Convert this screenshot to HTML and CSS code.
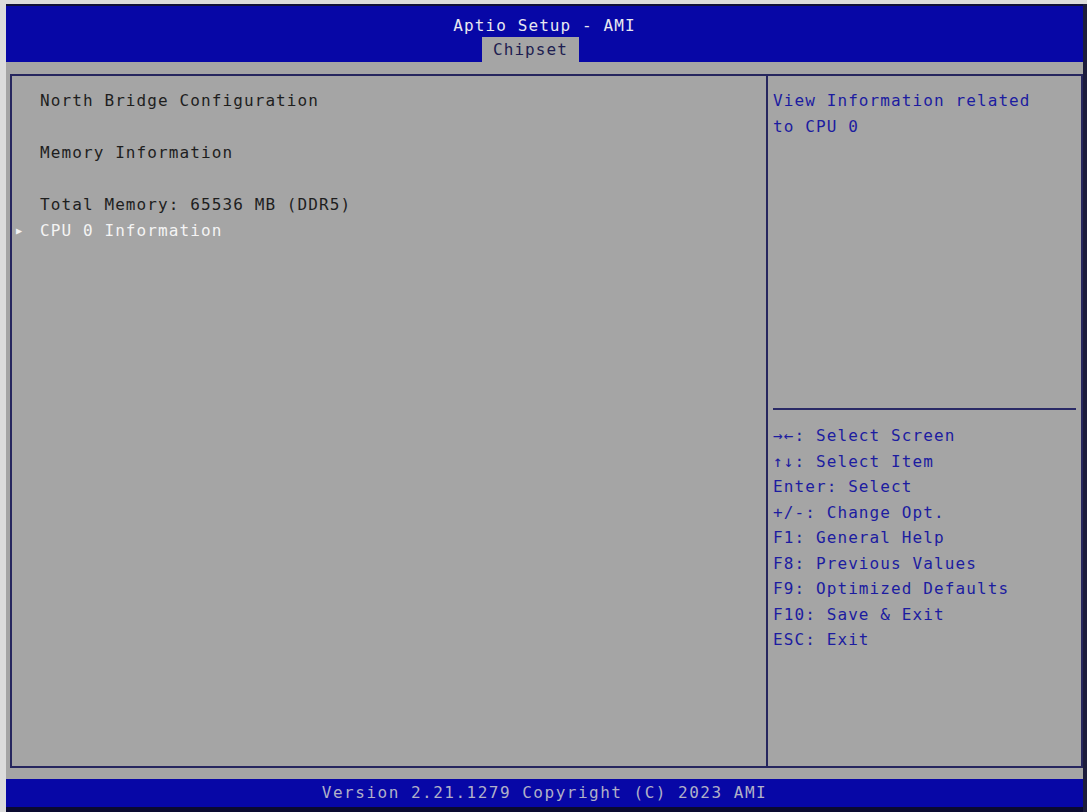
FILE: index.html
```html
<!DOCTYPE html>
<html>
<head>
<meta charset="utf-8">
<title>Aptio Setup - AMI</title>
<link rel="stylesheet" href="styles.css">
</head>
<body>
<div class="screen">
  <header class="top">
    <div class="title">Aptio Setup - AMI</div>
    <div class="tabs"><span class="tab">Chipset</span></div>
  </header>
  <div class="band">
    <div class="frame">
      <section class="main">
        <div class="line">North Bridge Configuration</div>
        <div class="line"></div>
        <div class="line">Memory Information</div>
        <div class="line"></div>
        <div class="line">Total Memory: 65536 MB (DDR5)</div>
        <div class="line selected"><span class="pointer">▶</span>CPU 0 Information</div>
      </section>
      <aside class="side">
        <div class="desc">
          <div class="line">View Information related</div>
          <div class="line">to CPU 0</div>
        </div>
        <div class="rule"></div>
        <div class="help">
          <div class="hline">→←: Select Screen</div>
          <div class="hline">↑↓: Select Item</div>
          <div class="hline">Enter: Select</div>
          <div class="hline">+/-: Change Opt.</div>
          <div class="hline">F1: General Help</div>
          <div class="hline">F8: Previous Values</div>
          <div class="hline">F9: Optimized Defaults</div>
          <div class="hline">F10: Save &amp; Exit</div>
          <div class="hline">ESC: Exit</div>
        </div>
      </aside>
    </div>
  </div>
  <footer class="bottom">Version 2.21.1279 Copyright (C) 2023 AMI</footer>
</div>
</body>
</html>
```
FILE: styles.css
```css
html, body {
  margin: 0;
  padding: 0;
}
body {
  background: #dcdcdc;
  width: 1087px;
  height: 812px;
  overflow: hidden;
  font-family: "DejaVu Sans Mono", "Liberation Mono", monospace;
  font-size: 16px;
  letter-spacing: 1.1px;
}
.screen {
  margin: 4px 0 0 6px;
  width: 1077px;
  border-right: 4px solid #1c1c3c;
  background: #a5a5a5;
  display: flex;
  flex-direction: column;
}
.top {
  height: 58px;
  background: #0707a6;
  box-sizing: border-box;
  border-top: 2px solid #101038;
  display: flex;
  flex-direction: column;
}
.title {
  color: #e8e8f0;
  text-align: center;
  line-height: 20px;
  padding-top: 10px;
}
.tabs {
  padding-left: 476px;
  margin-top: 1px;
  display: flex;
}
.tab {
  background: #a5a5a5;
  color: #1e1e50;
  width: 97px;
  height: 25px;
  line-height: 25px;
  text-align: center;
}
.band {
  height: 717px;
  box-sizing: border-box;
  padding: 12px 0 11px 4px;
}
.frame {
  height: 694px;
  box-sizing: border-box;
  border: 2px solid #26265e;
  display: flex;
}
.main {
  width: 756px;
  box-sizing: border-box;
  border-right: 2px solid #26265e;
  padding: 12px 0 0 28px;
  color: #1e1e1e;
}
.line {
  height: 26px;
  line-height: 26px;
  white-space: pre;
}
.selected {
  color: #f4f4f4;
  position: relative;
}
.pointer {
  position: absolute;
  left: -24px;
  font-size: 10px;
  color: #f4f4f4;
}
.side {
  flex: 1;
  display: flex;
  flex-direction: column;
  color: #1c1ca0;
}
.desc {
  height: 332px;
  box-sizing: border-box;
  padding: 12px 0 0 5px;
}
.rule {
  height: 2px;
  margin: 0 5px 0 5px;
  background: #2a2a66;
}
.help {
  padding: 13px 0 0 5px;
}
.hline {
  height: 25.5px;
  line-height: 25.5px;
  white-space: pre;
}
.bottom {
  height: 28px;
  line-height: 28px;
  background: #0707a6;
  color: #b0b0c8;
  text-align: center;
  letter-spacing: 1.5px;
  border-bottom: 5px solid #0a0a30;
}
```
